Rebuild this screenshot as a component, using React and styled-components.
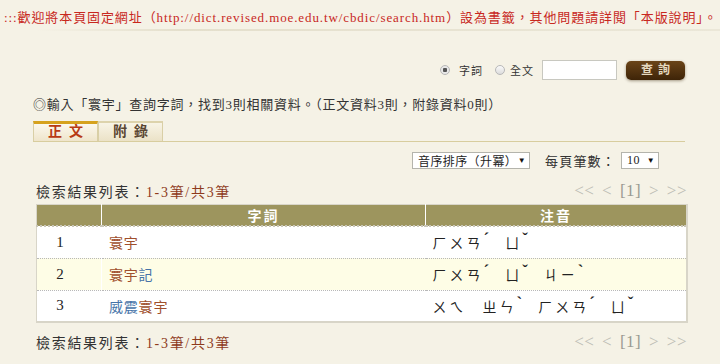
import React from 'react';
import styled, { createGlobalStyle } from 'styled-components';

const GlobalStyle = createGlobalStyle`
	body {
		margin: 0;
		background: #f5f2e6;
		font-family: "Liberation Serif", "Noto Sans CJK TC", serif;
		color: #333;
	}
`;

const Page = styled.div`
	width: 720px;
	height: 364px;
	overflow: hidden;
`;

const Notice = styled.div`
	height: 19px;
	padding: 10px 0 0 4px;
	font-size: 13px;
	line-height: 15px;
	letter-spacing: 0.9px;
	color: #c8281e;
	white-space: nowrap;
`;

const Divider = styled.div`
	height: 2px;
	background: linear-gradient(to right, rgba(225, 220, 200, 0) 5%, #e4dfcc 25%, #ebe7d8 100%);
`;

const SearchRow = styled.div`
	display: flex;
	justify-content: flex-end;
	align-items: center;
	margin-top: 29px;
	height: 20px;
	padding-right: 35px;
	font-size: 11px;
	letter-spacing: 1px;
	color: #333;
`;

const Radio = styled.span`
	display: inline-block;
	box-sizing: border-box;
	width: 10px;
	height: 10px;
	border-radius: 50%;
	border: 1px solid #b8b8b8;
	background: ${p => (p.checked ? 'radial-gradient(circle, #555 0 2px, #e8e8e8 2.5px)' : 'linear-gradient(#fafafa, #dcdcdc)')};
	margin-right: ${p => p.after}px;
`;

const Label = styled.span`
	margin-right: ${p => p.after}px;
`;

const TextBox = styled.div`
	box-sizing: border-box;
	width: 75px;
	height: 20px;
	background: #fff;
	border: 1px solid #c8c8c0;
`;

const SearchButton = styled.div`
	box-sizing: border-box;
	width: 59px;
	height: 19px;
	margin-left: 9px;
	border-radius: 5px;
	background: linear-gradient(#6a4418, #3e2408);
	box-shadow: 0 1px 3px rgba(60, 40, 10, 0.45);
	color: #e6dac0;
	font-size: 12px;
	font-weight: bold;
	letter-spacing: 5px;
	line-height: 19px;
	text-align: center;
	padding-left: 5px;
`;

const Content = styled.div`
	padding: 0 35px 0 33px;
`;

const Info = styled.div`
	margin-top: 17px;
	font-size: 13px;
	line-height: 16px;
	letter-spacing: 0.75px;
	white-space: nowrap;
`;

const TabBar = styled.div`
	display: flex;
	margin-top: 8px;
	height: 20px;
	border-bottom: 1px solid #d8cd9e;
`;

const Tab = styled.div`
	box-sizing: border-box;
	width: 65px;
	height: 20px;
	border: 1px solid #d9cfa6;
	border-bottom: none;
	border-top: ${p => (p.active ? '3px solid #d6a21e' : '2px solid #ddd3ac')};
	background: ${p => (p.active ? 'linear-gradient(#fbf8ee, #efe5cb)' : 'linear-gradient(#f8f4e6, #ebe2c7)')};
	color: ${p => (p.active ? '#b83a14' : '#5a4632')};
	font-size: 14px;
	font-weight: bold;
	letter-spacing: 7px;
	text-align: center;
	padding-left: 7px;
	line-height: ${p => (p.active ? 16 : 17)}px;
`;

const Controls = styled.div`
	display: flex;
	justify-content: flex-end;
	align-items: center;
	margin-top: 10px;
	height: 17px;
	padding-right: 26px;
	font-size: 13px;
`;

const Select = styled.div`
	box-sizing: border-box;
	flex-shrink: 0;
	display: flex;
	align-items: center;
	justify-content: space-between;
	width: ${p => p.width}px;
	height: 17px;
	padding: 0 3px 0 5px;
	background: #fff;
	border: 1px solid #b4b4ac;
	font-size: 12px;
	letter-spacing: 0.4px;
	color: #222;
	white-space: nowrap;
`;

const Caret = styled.span`
	font-size: 8px;
	color: #111;
`;

const PerPage = styled.span`
	margin: 0 5px 0 15px;
	letter-spacing: 1.2px;
	font-size: 13px;
	color: #333;
	white-space: nowrap;
`;

const ResultHead = styled.div`
	display: flex;
	justify-content: space-between;
	align-items: center;
	margin-top: ${p => p.top}px;
	padding-left: 3px;
	height: 16px;
`;

const ResultLabel = styled.span`
	font-size: 14px;
	letter-spacing: 1.7px;
	color: #333;
`;

const Count = styled.span`
	color: #8e3a1c;
`;

const Pager = styled.span`
	font-size: 17px;
	color: #bdbdb5;
	letter-spacing: 0.5px;
	word-spacing: 3px;
	margin-right: -2px;
`;

const CurrentPage = styled.span`
	color: #9a9a92;
`;

const Table = styled.table`
	margin: 5px 0 0 3px;
	width: 652px;
	table-layout: fixed;
	border-collapse: collapse;
	background: #fff;
	border: 1px solid #d8d5c8;
	border-right-width: 2px;
	border-bottom-width: 2px;
`;

const HeadCell = styled.th`
	height: 19px;
	padding: 0;
	background: #9d955e;
	color: #fff;
	font-size: 14px;
	letter-spacing: 2px;
	border-left: ${p => (p.first ? 'none' : '1px solid #fff')};
	border-bottom: 2px dotted #c9c6b8;
`;

const Row = styled.tr`
	height: 32px;
	background: ${p => (p.alt ? '#fefde6' : '#fff')};
	border-top: 1px dotted #b8b8b8;
	&:nth-child(2) {
		border-top: none;
	}
`;

const NumCell = styled.td`
	text-align: center;
	font-size: 15px;
	color: #222;
	padding: 0 18px 0 0;
`;

const WordCell = styled.td`
	padding-left: 7px;
	font-size: 14px;
	letter-spacing: 0.8px;
	border-left: 1px solid #fff;
`;

const Char = styled.span`
	color: ${p => (p.blue ? '#4673a8' : '#a04f2c')};
`;

const ZhuyinCell = styled.td`
	padding-left: 7px;
	font-size: 14px;
	color: #222;
	white-space: nowrap;
`;

const Syllable = styled.span`
	display: inline-block;
	margin-right: 16px;
	letter-spacing: 3px;
`;

const Tone = styled.span`
	display: inline-block;
	font-size: 17px;
	font-weight: bold;
	line-height: 10px;
	vertical-align: 4px;
	margin-left: 0;
	letter-spacing: 0;
`;

const rows = [
	{ no: 1, word: [['寰宇']], zhuyin: [['ㄏㄨㄢ', 'ˊ'], ['ㄩ', 'ˇ']] },
	{ no: 2, word: [['寰宇'], ['記', true]], zhuyin: [['ㄏㄨㄢ', 'ˊ'], ['ㄩ', 'ˇ'], ['ㄐㄧ', 'ˋ']] },
	{ no: 3, word: [['威震', true], ['寰宇']], zhuyin: [['ㄨㄟ', ''], ['ㄓㄣ', 'ˋ'], ['ㄏㄨㄢ', 'ˊ'], ['ㄩ', 'ˇ']] }
];

const ResultSummary = ({ top }) => (
	<ResultHead top={top}>
		<ResultLabel>
			檢索結果列表：<Count>1-3筆/共3筆</Count>
		</ResultLabel>
		<Pager>
			&lt;&lt; &lt; <CurrentPage>[1]</CurrentPage> &gt; &gt;&gt;
		</Pager>
	</ResultHead>
);

const App = () => (
	<Page>
		<GlobalStyle />
		<Notice>
			:::歡迎將本頁固定網址（http://dict.revised.moe.edu.tw/cbdic/search.htm）設為書籤，其他問題請詳閱「本版說明」。
		</Notice>
		<Divider />
		<SearchRow>
			<Radio checked after={9} />
			<Label after={12}>字詞</Label>
			<Radio after={5} />
			<Label after={8}>全文</Label>
			<TextBox />
			<SearchButton>查詢</SearchButton>
		</SearchRow>
		<Content>
			<Info>◎輸入「寰宇」查詢字詞，找到3則相關資料。（正文資料3則，附錄資料0則）</Info>
			<TabBar>
				<Tab active>正文</Tab>
				<Tab>附錄</Tab>
			</TabBar>
			<Controls>
				<Select width={118}>
					音序排序（升冪）<Caret>▼</Caret>
				</Select>
				<PerPage>每頁筆數：</PerPage>
				<Select width={38}>
					10<Caret>▼</Caret>
				</Select>
			</Controls>
			<ResultSummary top={14} />
			<Table>
				<colgroup>
					<col style={{ width: 65 }} />
					<col style={{ width: 324 }} />
					<col />
				</colgroup>
				<tbody>
					<tr>
						<HeadCell first />
						<HeadCell>字詞</HeadCell>
						<HeadCell>注音</HeadCell>
					</tr>
					{rows.map((row, index) => (
						<Row key={row.no} alt={index === 1}>
							<NumCell>{row.no}</NumCell>
							<WordCell>
								{row.word.map(([text, blue], i) => (
									<Char key={i} blue={blue}>
										{text}
									</Char>
								))}
							</WordCell>
							<ZhuyinCell>
								{row.zhuyin.map(([sound, tone], i) => (
									<Syllable key={i}>
										{sound}
										{tone && <Tone>{tone}</Tone>}
									</Syllable>
								))}
							</ZhuyinCell>
						</Row>
					))}
				</tbody>
			</Table>
			<ResultSummary top={11} />
		</Content>
	</Page>
);

export default App;
